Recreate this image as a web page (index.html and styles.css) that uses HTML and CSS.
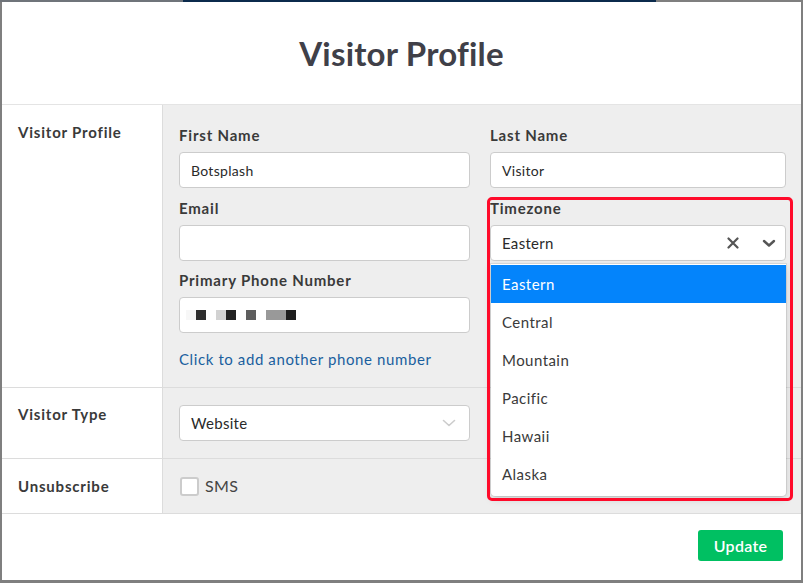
FILE: index.html
```html
<!DOCTYPE html>
<html>
	<head>
	<meta charset="utf-8">
	<title>Visitor Profile</title>
	<link rel="stylesheet" href="styles.css">
	</head>

	<body>
		<div class="page-strip">
			<span class="strip-muted"></span>
			<span class="strip-nav"></span>
			<span class="strip-muted"></span>
		</div>

		<div class="modal">
			<div class="modal-header">
				<h1>Visitor Profile</h1>
			</div>

			<div class="section">
				<div class="section-label">Visitor Profile</div>
				<div class="section-body">
					<div class="fields">
						<div class="field">
							<label>First Name</label>
							<div class="input">Botsplash</div>
						</div>
						<div class="field">
							<label>Last Name</label>
							<div class="input">Visitor</div>
						</div>
						<div class="field">
							<label>Email</label>
							<div class="input"></div>
						</div>
						<div class="field">
							<label>Timezone</label>
							<div class="input select open">
								<span class="select-value">Eastern</span>
								<span class="select-clear">
									<svg width="12" height="12" viewBox="0 0 12 12"><path d="M1.5 1.5 L10.5 10.5 M10.5 1.5 L1.5 10.5" stroke="#555" stroke-width="2.2" stroke-linecap="round"/></svg>
								</span>
								<span class="select-arrow">
									<svg width="14" height="9" viewBox="0 0 14 9"><path d="M2 2 L7 6.5 L12 2" fill="none" stroke="#555" stroke-width="2.4" stroke-linecap="round" stroke-linejoin="round"/></svg>
								</span>
							</div>
						</div>
						<div class="field field-phone">
							<label>Primary Phone Number</label>
							<div class="input">
								<span class="masked">
									<i style="background:#f7f7f7"></i><i style="background:#2e2e2e"></i><b></b>
									<i style="background:#d2d2d2"></i><i style="background:#222"></i><b></b>
									<i style="background:#5e5e5e"></i><b></b>
									<i style="background:#999"></i><i style="background:#999"></i><i style="background:#1e1e1e"></i>
								</span>
							</div>
						</div>
					</div>
					<a class="add-phone" href="#">Click to add another phone number</a>
				</div>
			</div>

			<div class="section section-type">
				<div class="section-label">Visitor Type</div>
				<div class="section-body">
					<div class="fields">
						<div class="input select">
							<span class="select-value">Website</span>
							<span class="select-arrow light">
								<svg width="14" height="9" viewBox="0 0 14 9"><path d="M1.5 1.5 L7 6.5 L12.5 1.5" fill="none" stroke="#ccc" stroke-width="1.6" stroke-linecap="round" stroke-linejoin="round"/></svg>
							</span>
						</div>
					</div>
				</div>
			</div>

			<div class="section section-unsub">
				<div class="section-label">Unsubscribe</div>
				<div class="section-body">
					<label class="check"><span class="box"></span>SMS</label>
				</div>
			</div>

			<div class="modal-footer">
				<button class="btn-update">Update</button>
			</div>

			<!-- open timezone menu -->
			<ul class="menu">
				<li class="active">Eastern</li>
				<li>Central</li>
				<li>Mountain</li>
				<li>Pacific</li>
				<li>Hawaii</li>
				<li>Alaska</li>
			</ul>

			<div class="callout"></div>
		</div>
	</body>
</html>
```

FILE: styles.css
```css
body, html {
	height: 100%;
	margin: 0;
}

body {
	padding: 0;
	background: #7f7f7f;
	font-family: "Lato", "Noto Sans", sans-serif;
	letter-spacing: 0.4px;
	color: #3a3a3a;
	-webkit-font-smoothing: antialiased;
}

.page-strip {
	display: flex;
	height: 2px;
}

.strip-muted {
	flex: 0 0 183px;
	background: #6f747a;
}

.strip-nav {
	flex: 0 0 473px;
	background: #0b2a4c;
}

.strip-muted:last-child {
	flex: 1;
	background: #7f7f7f;
}

.modal {
	position: relative;
	width: 799px;
	height: 578px;
	margin-left: 2px;
	background: #fff;
	display: flex;
	flex-direction: column;
}

.modal-header {
	height: 102px;
	border-bottom: 1px solid #e4e4e4;
	display: flex;
	align-items: center;
	justify-content: center;
}

.modal-header h1 {
	margin: 0;
	font-size: 33px;
	font-weight: 700;
	color: #404048;
	letter-spacing: 0.2px;
}

.section {
	display: grid;
	grid-template-columns: 161px 1fr;
	border-bottom: 1px solid #dcdcdc;
}

.section-label {
	border-right: 1px solid #dcdcdc;
	padding: 16px 0 0 16px;
	font-size: 15px;
	line-height: 22px;
	font-weight: 700;
	letter-spacing: 0.8px;
	color: #3a3a3a;
}

.section-body {
	background: #eee;
	padding: 20px 15px 18px 16px;
}

.fields {
	display: grid;
	grid-template-columns: 291px 296px;
	column-gap: 20px;
	row-gap: 10px;
}

.field-phone {
	margin-top: -1px;
}

.field label {
	display: block;
	font-size: 15px;
	line-height: 20px;
	font-weight: 700;
	letter-spacing: 0.8px;
	margin-bottom: 7px;
	color: #3a3a3a;
}

.input {
	box-sizing: border-box;
	height: 36px;
	background: #fff;
	border: 1px solid #ccc;
	border-radius: 4px;
	padding: 0 11px;
	display: flex;
	align-items: center;
	font-size: 14px;
	letter-spacing: 0.3px;
	color: #2a2a2a;
}

.select {
	font-size: 15px;
}

.select-value {
	flex: 1;
}

.select-clear {
	display: flex;
	margin-right: 23px;
}

.select-arrow {
	display: flex;
	margin-right: -2px;
}

.select-arrow.light {
	margin-right: 2px;
}

.masked {
	display: flex;
	margin-left: -5px;
}

.masked i,
.masked b {
	display: block;
	width: 10px;
	height: 10px;
}

.add-phone {
	display: block;
	margin-top: 16px;
	font-size: 15px;
	line-height: 20px;
	letter-spacing: 0.6px;
	color: #1a5f9e;
	text-decoration: none;
}

.section-type .section-label {
	padding-top: 15px;
}

.section-type .section-body {
	padding-top: 17px;
	padding-bottom: 17px;
}

.section-type .fields {
	grid-template-columns: 291px;
}

.section-unsub .section-label {
	padding-top: 16px;
}

.section-unsub .section-body {
	padding: 17px 16px 17px 17px;
}

.check {
	display: flex;
	align-items: center;
	gap: 6px;
	font-size: 16px;
	line-height: 20px;
	color: #444;
}

.check .box {
	box-sizing: border-box;
	width: 19px;
	height: 19px;
	border: 2px solid #ccc;
	border-radius: 3px;
	background: #fff;
}

.modal-footer {
	flex: 1;
	display: flex;
	justify-content: flex-end;
	align-items: flex-start;
	padding: 16px 18px 0 0;
}

.btn-update {
	width: 85px;
	height: 31px;
	border: 0;
	border-radius: 3px;
	background: #00c062;
	color: #fff;
	font-family: inherit;
	font-size: 16px;
	font-weight: 600;
	letter-spacing: 0.3px;
}

.menu {
	position: absolute;
	left: 489px;
	top: 262px;
	width: 295px;
	margin: 0;
	padding: 1px 0 3px;
	list-style: none;
	background: #fff;
	border-radius: 0 0 4px 4px;
	box-shadow: 0 0 0 1px rgba(0, 0, 0, 0.08), 0 3px 8px rgba(0, 0, 0, 0.15);
}

.menu li {
	height: 38px;
	line-height: 38px;
	padding-left: 11px;
	font-size: 15px;
	letter-spacing: 0.45px;
	color: #3a3a3a;
}

.menu li.active {
	background: #0484fb;
	color: #fff;
}

.callout {
	position: absolute;
	left: 485px;
	top: 195px;
	width: 300px;
	height: 298px;
	border: 3px solid #ff0a2a;
	border-radius: 5px;
}
```
